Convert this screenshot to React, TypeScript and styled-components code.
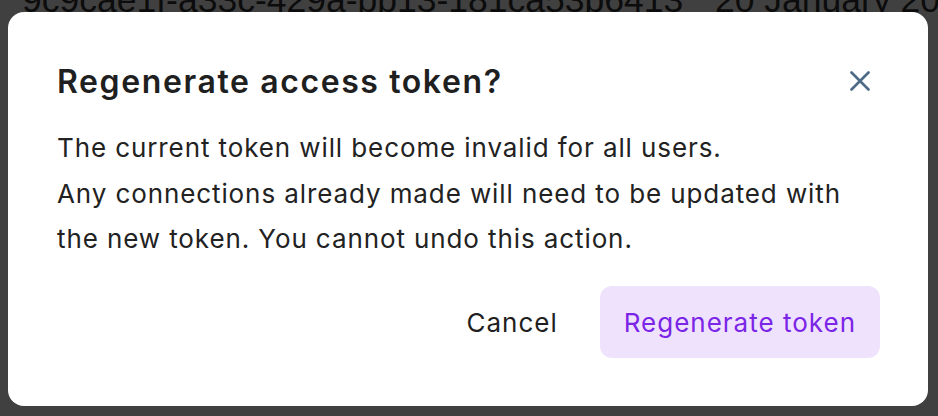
import styled, { createGlobalStyle } from 'styled-components'

const GlobalStyle = createGlobalStyle`
  html, body {
    margin: 0;
    padding: 0;
    background: #404040;
    font-family: Inter, "Noto Sans", sans-serif;
  }
`

const Page = styled.div`
  width: 938px;
  height: 416px;
  overflow: hidden;
  background: #404040;
`

// the table row behind the overlay, mostly hidden by the dialog
const PeekRow = styled.div`
  height: 12px;
  overflow: hidden;
  display: grid;
  grid-template-columns: 693px 1fr;
  padding-left: 22px;
`

const PeekCell = styled.span`
  margin-top: -17px;
  font-family: "Liberation Sans", Arial, sans-serif;
  font-size: 35.5px;
  line-height: 1;
  color: #0c0c0c;
  white-space: nowrap;
`

const Dialog = styled.div`
  margin: 0 10px 0 8px;
  height: 394px;
  box-sizing: border-box;
  background: #ffffff;
  border-radius: 16px;
  padding: 48px 48px 48px 48px;
  display: flex;
  flex-direction: column;
`

const Header = styled.div`
  display: flex;
  align-items: center;
  justify-content: space-between;
  margin-top: 1px;
`

const Title = styled.h2`
  margin: 0 0 0 1px;
  font-size: 32px;
  font-weight: 600;
  letter-spacing: 1.6px;
  color: #1f1f1f;
`

const CloseButton = styled.button`
  width: 40px;
  height: 40px;
  border: 0;
  padding: 0;
  background: transparent;
  display: flex;
  align-items: center;
  justify-content: center;
  color: #4d6a86;
  cursor: pointer;
`

const Body = styled.p`
  margin: 24px 0 0 1px;
  font-size: 26px;
  letter-spacing: 0.9px;
  line-height: 45.5px;
  color: #222222;
`

const Actions = styled.div`
  margin-top: auto;
  display: flex;
  justify-content: flex-end;
  align-items: center;
  gap: 18px;
`

const ActionButton = styled.button<{ $primary?: boolean }>`
  height: 72px;
  padding: 0 24px;
  border: 0;
  border-radius: 12px;
  font-family: Inter, "Noto Sans", sans-serif;
  font-size: 26px;
  letter-spacing: 1px;
  font-weight: 400;
  cursor: pointer;
  background: ${(p) => (p.$primary ? '#efe2fd' : 'transparent')};
  color: ${(p) => (p.$primary ? '#7b25e6' : '#1f1f1f')};
`

const CloseIcon = () => (
  <svg width="20" height="20" viewBox="0 0 20 20" fill="none">
    <path
      d="M1.5 1.5 L18.5 18.5 M18.5 1.5 L1.5 18.5"
      stroke="currentColor"
      strokeWidth="2.6"
      strokeLinecap="round"
    />
  </svg>
)

export default function App() {
  return (
    <Page>
      <GlobalStyle />
      <PeekRow>
        <PeekCell>9c9cae1f-a33c-429a-bb13-181ca53b6413</PeekCell>
        <PeekCell>20 January 2024</PeekCell>
      </PeekRow>
      <Dialog>
        <Header>
          <Title>Regenerate access token?</Title>
          <CloseButton aria-label="Close">
            <CloseIcon />
          </CloseButton>
        </Header>
        <Body>
          The current token will become invalid for all users.
          <br />
          Any connections already made will need to be updated with
          <br />
          the new token. You cannot undo this action.
        </Body>
        <Actions>
          <ActionButton>Cancel</ActionButton>
          <ActionButton $primary>Regenerate token</ActionButton>
        </Actions>
      </Dialog>
    </Page>
  )
}
